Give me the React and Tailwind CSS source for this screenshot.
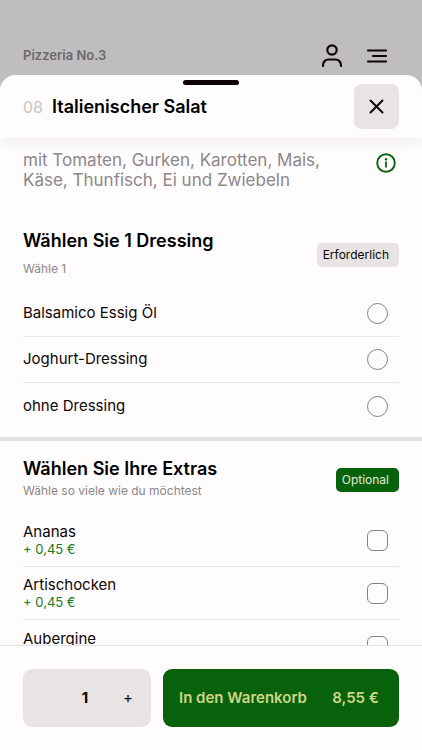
import { useState } from 'react';

const dressings = ['Balsamico Essig Öl', 'Joghurt-Dressing', 'ohne Dressing'];

const extras = [
  { id: 'ananas', name: 'Ananas', price: 0.45 },
  { id: 'artischocken', name: 'Artischocken', price: 0.45 },
  { id: 'aubergine', name: 'Aubergine', price: 0.45 },
];

const BASE_PRICE = 8.55;

const formatPrice = (value) => `${value.toFixed(2).replace('.', ',')} €`;

function UserIcon() {
  return (
    <svg width="24" height="26" viewBox="0 0 24 26" fill="none" stroke="currentColor" strokeWidth="2.2" strokeLinecap="round">
      <circle cx="12" cy="7" r="4.7" />
      <path d="M3 23v-1a5.500 5.500 0 0 1 5.500-5.500h7a5.500 5.500 0 0 1 5.500 5.500v1" />
    </svg>
  );
}

function MenuIcon() {
  return (
    <svg width="22" height="16" viewBox="0 0 22 16" fill="none" stroke="currentColor" strokeWidth="2.2" strokeLinecap="round">
      <path d="M2 2.5h18M7 8h13M2 13.5h18" />
    </svg>
  );
}

function CloseIcon() {
  return (
    <svg width="15" height="15" viewBox="0 0 15 15" fill="none" stroke="currentColor" strokeWidth="2" strokeLinecap="round">
      <path d="M1.500 1.500l12 12M13.500 1.500l-12 12" />
    </svg>
  );
}

function InfoIcon() {
  return (
    <svg width="20" height="20" viewBox="0 0 20 20" fill="none" stroke="currentColor">
      <circle cx="10" cy="10" r="8.8" strokeWidth="1.9" />
      <path d="M10 8.5v5.9" strokeWidth="1.8" />
      <circle cx="10" cy="6.2" r="1.2" fill="currentColor" stroke="none" />
    </svg>
  );
}

export default function App() {
  const [dressing, setDressing] = useState('');
  const [selected, setSelected] = useState([]);
  const [count, setCount] = useState(1);

  const toggleExtra = (id) => {
    setSelected(prev => (prev.includes(id) ? prev.filter(x => x !== id) : [...prev, id]));
  };

  const extrasPrice = extras
    .filter(e => selected.includes(e.id))
    .reduce((sum, e) => sum + e.price, 0);
  const total = (BASE_PRICE + extrasPrice) * count;

  return (
    <div className="flex h-screen flex-col bg-[#bfbdbe] font-['Inter',sans-serif] text-[#0d0606]">
      {/* Page header behind the sheet */}
      <header className="flex items-end justify-between px-[23px] pt-[42px] pb-[5px]">
        <span className="pb-[6px] text-[13px] leading-[18px] font-semibold text-[#6c696a]">Pizzeria No.3</span>
        <div className="flex items-center gap-[22px] pr-[11px]">
          <button aria-label="Konto" className="py-px"><UserIcon /></button>
          <button aria-label="Menü"><MenuIcon /></button>
        </div>
      </header>

      <main className="flex min-h-0 flex-1 flex-col overflow-hidden rounded-t-2xl bg-[#fefcfd]">
        <div className="relative z-10 flex items-center justify-between bg-[#fefcfd] px-[23px] py-[9px] shadow-[0_4px_12px_rgba(80,50,40,0.08)]">
          <div className="absolute top-[5px] left-1/2 h-[5px] w-14 -translate-x-1/2 rounded-full bg-[#0d0204]" />
          <h1 className="flex items-center gap-[9px] text-[18px] leading-6 font-semibold text-black">
            <span className="text-[16px] font-normal text-[#c9c5c6]">08</span>
            Italienischer Salat
          </h1>
          <button aria-label="Schließen" className="flex size-[45px] items-center justify-center rounded-lg bg-[#e7e4e3]">
            <CloseIcon />
          </button>
        </div>

        <div className="min-h-0 flex-1 overflow-y-auto [scrollbar-width:none]">
          <div className="flex items-start justify-between px-[23px] pt-3">
            <p className="max-w-80 text-[17px] leading-5 text-[#8c8788]">
              mit Tomaten, Gurken, Karotten, Mais, Käse, Thunfisch, Ei und Zwiebeln
            </p>
            <button aria-label="Produktinformationen" className="mt-[3px] mr-[3px] text-[#0b640b]">
              <InfoIcon />
            </button>
          </div>

          {/* Dressing */}
          <section className="px-[23px] pt-[39px] pb-2">
            <div className="flex items-center justify-between pb-[13px]">
              <div>
                <h2 className="text-[18px] leading-6 font-semibold text-black">Wählen Sie 1 Dressing</h2>
                <p className="pt-[7px] text-[12px] leading-[18px] text-[#8c8788]">Wähle 1</p>
              </div>
              <span className="mt-[3px] rounded-[5px] bg-[#e7e4e3] py-[3px] pr-[10px] pl-[6px] text-[12px] leading-[18px]">
                Erforderlich
              </span>
            </div>
            <div className="divide-y divide-[#e9e6e7]">
              {dressings.map((name) => (
                <label key={name} className="flex h-[46px] items-center justify-between pr-[11px] text-[15px]">
                  {name}
                  <input
                    type="radio"
                    name="dressing"
                    checked={dressing === name}
                    onChange={() => setDressing(name)}
                    className="size-[21px] appearance-none rounded-full border border-[#858182] checked:border-[6px] checked:border-[#0b640b]"
                  />
                </label>
              ))}
            </div>
          </section>

          {/* Extras */}
          <section className="border-t-4 border-[#e4e1e2] px-[23px] pt-4">
            <div className="flex items-center justify-between pb-[14px]">
              <div>
                <h2 className="text-[18px] leading-6 font-semibold text-black">Wählen Sie Ihre Extras</h2>
                <p className="pt-px text-[12px] leading-[18px] text-[#8c8788]">Wähle so viele wie du möchtest</p>
              </div>
              <span className="mt-[3px] rounded-[5px] bg-[#07620b] py-[3px] pr-[10px] pl-[6px] text-[12px] leading-[18px] text-[#e2ecd8]">
                Optional
              </span>
            </div>
            <div className="divide-y divide-[#e9e6e7]">
              {extras.map((extra) => (
                <label key={extra.id} className="flex h-[53px] items-center justify-between pr-[11px]">
                  <span>
                    <span className="block text-[15px] leading-[18px]">{extra.name}</span>
                    <span className="block text-[13px] leading-4 text-[#177a1d]">+ {formatPrice(extra.price)}</span>
                  </span>
                  <input
                    type="checkbox"
                    checked={selected.includes(extra.id)}
                    onChange={() => toggleExtra(extra.id)}
                    className="size-[21px] appearance-none rounded-md border border-[#858182] checked:bg-[#0b640b]"
                  />
                </label>
              ))}
            </div>
          </section>
        </div>

        <footer className="flex gap-3 border-t border-[#e4e1e2] bg-[#fefcfd] px-[23px] py-[23px]">
          <div className="flex h-[58px] w-32 items-center justify-end rounded-[9px] bg-[#e7e4e3] pr-[3px] text-center text-[15px]">
            {count > 1 && (
              <button onClick={() => setCount(count - 1)} aria-label="Weniger" className="flex-1">−</button>
            )}
            <span className="w-[46px] font-bold">{count}</span>
            <button onClick={() => setCount(count + 1)} aria-label="Mehr" className="w-10">+</button>
          </div>
          <button className="flex h-[58px] flex-1 items-center justify-between rounded-[9px] bg-[#07620b] pr-5 pl-4 text-[15px] font-semibold text-[#cfd583]">
            <span>In den Warenkorb</span>
            <span>{formatPrice(total)}</span>
          </button>
        </footer>
      </main>
    </div>
  );
}
